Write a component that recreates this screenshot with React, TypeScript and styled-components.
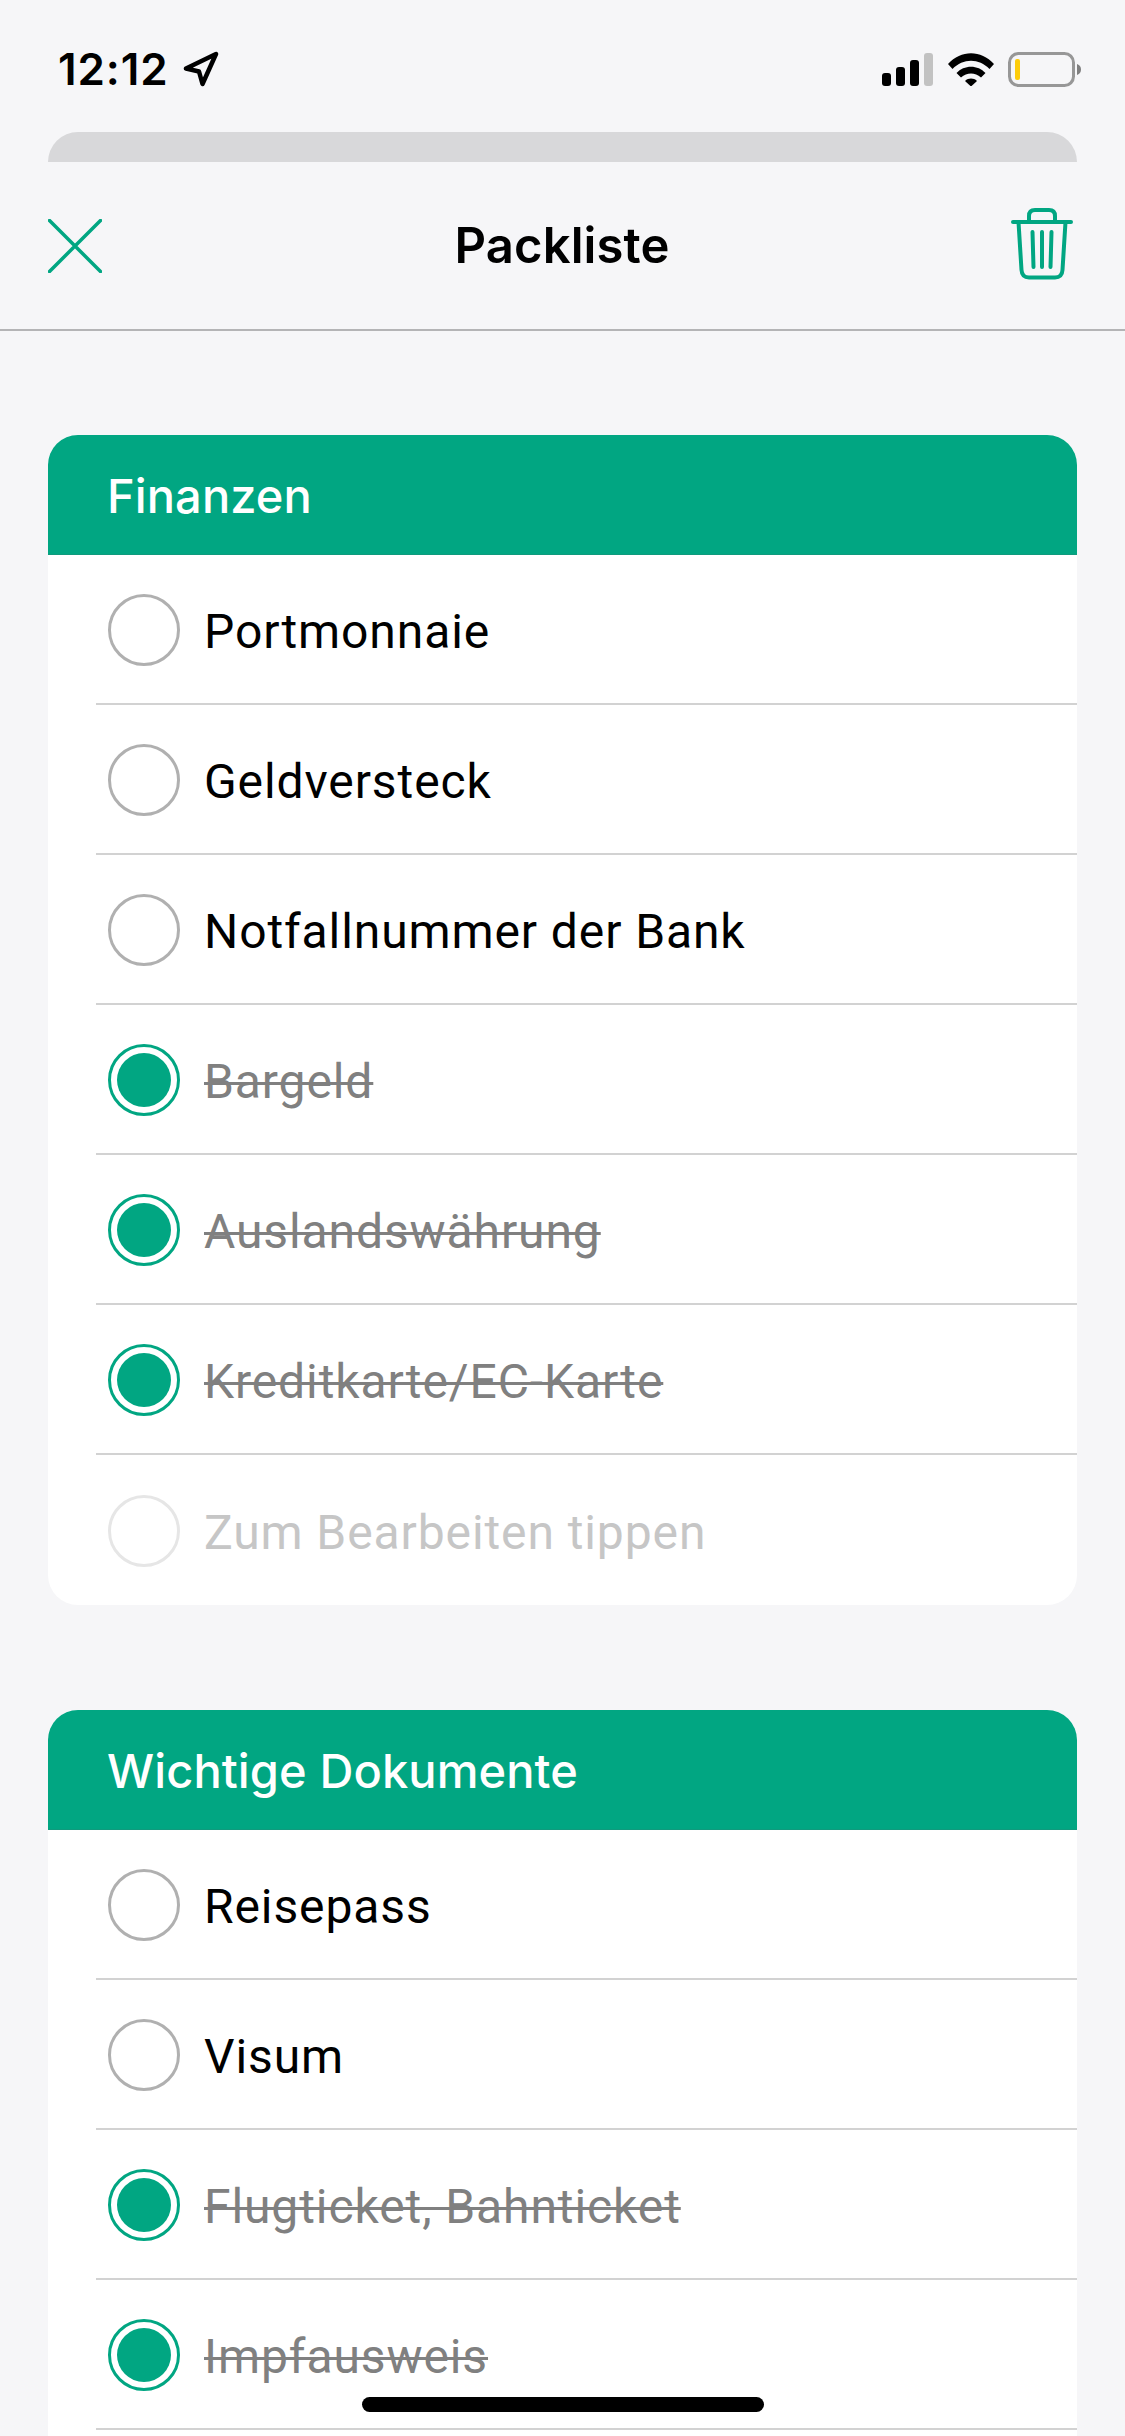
import React from 'react'
import styled, { createGlobalStyle } from 'styled-components'

const TEAL = '#01a682'

const GlobalStyle = createGlobalStyle`
  html, body {
    margin: 0;
    padding: 0;
    background: #f6f6f8;
  }
  * {
    box-sizing: border-box;
  }
`

const Screen = styled.div`
  position: relative;
  width: 1125px;
  height: 2436px;
  overflow: hidden;
  background: #f6f6f8;
  font-family: Inter, 'Liberation Sans', sans-serif;
  color: #000;
`

const StatusBar = styled.div`
  display: flex;
  align-items: center;
  justify-content: space-between;
  height: 132px;
  padding: 6px 43px 0 58px;
`

const Clock = styled.div`
  display: flex;
  align-items: center;
  gap: 14px;
  font-size: 44px;
  font-weight: 600;
  line-height: 52px;
  letter-spacing: 0.9px;
`

const StatusIcons = styled.div`
  display: flex;
  align-items: center;
  gap: 14px;
`

const SheetEdge = styled.div`
  height: 30px;
  margin: 0 48px;
  background: #d8d8da;
  border-radius: 30px 30px 0 0;
`

const NavBar = styled.div`
  display: grid;
  grid-template-columns: 1fr auto 1fr;
  align-items: center;
  height: 169px;
  padding: 0 52px 0 48px;
  border-bottom: 2px solid #b4b4b6;
`

const NavTitle = styled.div`
  font-size: 49px;
  font-weight: 600;
  letter-spacing: 0.1px;
  padding-left: 3px;
`

const NavAction = styled.div<{ $right?: boolean }>`
  display: flex;
  justify-content: ${({ $right }) => ($right ? 'flex-end' : 'flex-start')};
  margin-top: ${({ $right }) => ($right ? '-4px' : '0')};
`

const Content = styled.div`
  display: flex;
  flex-direction: column;
  gap: 105px;
  padding: 104px 48px 0;
`

const Card = styled.section<{ $continues?: boolean }>`
  background: #fff;
  border-radius: 30px;
  overflow: hidden;
  padding-bottom: ${({ $continues }) => ($continues ? '150px' : '0')};
`

const CardHeader = styled.h2`
  display: flex;
  align-items: center;
  height: 120px;
  margin: 0;
  padding: 2px 0 0 59px;
  background: ${TEAL};
  border-bottom: 1px solid #109a7d;
  color: #fff;
  font-size: 47px;
  font-weight: 500;
  letter-spacing: 0.1px;
`

const Row = styled.div<{ $last?: boolean }>`
  display: flex;
  align-items: center;
  gap: 24px;
  height: 150px;
  margin-left: 48px;
  padding: 2px 0 0 12px;
  border-bottom: ${({ $last }) => ($last ? 'none' : '2px solid #d2d2d2')};
`

const Radio = styled.div<{ $state: ItemState }>`
  display: flex;
  align-items: center;
  justify-content: center;
  flex: none;
  width: 72px;
  height: 72px;
  border-radius: 50%;
  border: 3px solid
    ${({ $state }) => ($state === 'done' ? TEAL : $state === 'hint' ? '#e6e6e6' : '#b0b0b0')};

  &::after {
    content: '';
    display: ${({ $state }) => ($state === 'done' ? 'block' : 'none')};
    width: 54px;
    height: 54px;
    border-radius: 50%;
    background: ${TEAL};
  }
`

const Label = styled.span<{ $state: ItemState }>`
  padding-top: 2px;
  font-family: Roboto, Inter, 'Liberation Sans', sans-serif;
  font-size: 48px;
  font-weight: 400;
  letter-spacing: 0.9px;
  color: ${({ $state }) => ($state === 'done' ? '#808080' : $state === 'hint' ? '#c6c6c6' : '#000')};
  text-decoration: ${({ $state }) => ($state === 'done' ? 'line-through' : 'none')};
  text-decoration-thickness: 3px;
`

const HomeIndicator = styled.div`
  position: absolute;
  left: 362px;
  top: 2397px;
  width: 402px;
  height: 15px;
  border-radius: 8px;
  background: #000;
`

type ItemState = 'open' | 'done' | 'hint'

const sections: { title: string; continues?: boolean; items: [string, ItemState][] }[] = [
  {
    title: 'Finanzen',
    items: [
      ['Portmonnaie', 'open'],
      ['Geldversteck', 'open'],
      ['Notfallnummer der Bank', 'open'],
      ['Bargeld', 'done'],
      ['Auslandswährung', 'done'],
      ['Kreditkarte/EC-Karte', 'done'],
      ['Zum Bearbeiten tippen', 'hint'],
    ],
  },
  {
    title: 'Wichtige Dokumente',
    continues: true,
    items: [
      ['Reisepass', 'open'],
      ['Visum', 'open'],
      ['Flugticket, Bahnticket', 'done'],
      ['Impfausweis', 'done'],
    ],
  },
]

function LocationArrow() {
  return (
    <svg width="36" height="36" viewBox="0 0 36 36" fill="none">
      <path d="M3 17.5 L33 3 L19.5 33 L16 20.5 Z" stroke="#000" strokeWidth="4.5" strokeLinejoin="round" />
    </svg>
  )
}

function SignalIcon() {
  return (
    <svg width="52" height="33" viewBox="0 0 52 33">
      <rect x="0" y="20" width="9" height="13" rx="3" fill="#000" />
      <rect x="14" y="14" width="9" height="19" rx="3" fill="#000" />
      <rect x="28" y="7" width="9" height="26" rx="3" fill="#000" />
      <rect x="42" y="0" width="9" height="33" rx="3" fill="#c2c2c2" />
    </svg>
  )
}

function WifiIcon() {
  return (
    <svg width="46" height="33" viewBox="0 0 46 33">
      <path d="M0 11 C13 -3.5 33 -3.5 46 11 L41.5 16 C31 5 15 5 4.5 16 Z" fill="#000" />
      <path d="M8.5 20 C16 11.5 30 11.5 37.500 20 L33 24.500 C27 19 19 19 13 24.500 Z" fill="#000" />
      <path d="M17 28 C20.500 24.800 25.500 24.800 29 28 L23 33.500 Z" fill="#000" />
    </svg>
  )
}

function BatteryIcon() {
  return (
    <svg width="74" height="35" viewBox="0 0 74 35">
      <rect x="1.500" y="1.500" width="64" height="32" rx="9" fill="none" stroke="#979797" strokeWidth="3" />
      <rect x="7" y="7" width="5" height="21" rx="2" fill="#fdcc0a" />
      <path d="M69 12 C72 13 73 15 73 17.500 C73 20 72 22 69 23 Z" fill="#808080" />
    </svg>
  )
}

function CloseIcon() {
  return (
    <svg width="54" height="54" viewBox="0 0 54 54">
      <path d="M1.500 1.500 L52.500 52.500 M52.500 1.500 L1.500 52.500" stroke={TEAL} strokeWidth="3.5" strokeLinecap="round" />
    </svg>
  )
}

function TrashIcon() {
  return (
    <svg width="62" height="72" viewBox="0 0 62 72" fill="none" stroke={TEAL} strokeWidth="4" strokeLinecap="round">
      <path d="M2 14 H60" />
      <path d="M18 14 V8 C18 4 20 2 24 2 H38 C42 2 44 4 44 8 V14" />
      <path d="M7.500 14 L10.500 62 C10.800 67 13 69.500 18 69.500 H44 C49 69.500 51.200 67 51.500 62 L54.500 14" />
      <path d="M21.500 24 L22.500 59 M31 24 V59 M40.500 24 L39.500 59" />
    </svg>
  )
}

export default function App() {
  return (
    <Screen>
      <GlobalStyle />
      <StatusBar>
        <Clock>
          12:12
          <LocationArrow />
        </Clock>
        <StatusIcons>
          <SignalIcon />
          <WifiIcon />
          <BatteryIcon />
        </StatusIcons>
      </StatusBar>
      <SheetEdge />
      <NavBar>
        <NavAction>
          <CloseIcon />
        </NavAction>
        <NavTitle>Packliste</NavTitle>
        <NavAction $right>
          <TrashIcon />
        </NavAction>
      </NavBar>
      <Content>
        {sections.map(section => (
          <Card key={section.title} $continues={section.continues}>
            <CardHeader>{section.title}</CardHeader>
            {section.items.map(([label, state], i) => (
              <Row key={label} $last={!section.continues && i === section.items.length - 1}>
                <Radio $state={state} />
                <Label $state={state}>{label}</Label>
              </Row>
            ))}
          </Card>
        ))}
      </Content>
      <HomeIndicator />
    </Screen>
  )
}
